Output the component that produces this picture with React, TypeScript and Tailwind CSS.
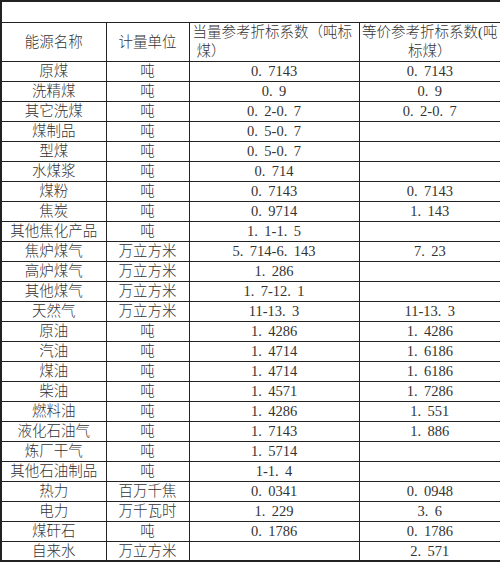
import React from "react";

type Row = [string, string, string, string];

const rows: Row[] = [
  ["原煤", "吨", "0.7143", "0.7143"],
  ["洗精煤", "吨", "0.9", "0.9"],
  ["其它洗煤", "吨", "0.2-0.7", "0.2-0.7"],
  ["煤制品", "吨", "0.5-0.7", ""],
  ["型煤", "吨", "0.5-0.7", ""],
  ["水煤浆", "吨", "0.714", ""],
  ["煤粉", "吨", "0.7143", "0.7143"],
  ["焦炭", "吨", "0.9714", "1.143"],
  ["其他焦化产品", "吨", "1.1-1.5", ""],
  ["焦炉煤气", "万立方米", "5.714-6.143", "7.23"],
  ["高炉煤气", "万立方米", "1.286", ""],
  ["其他煤气", "万立方米", "1.7-12.1", ""],
  ["天然气", "万立方米", "11-13.3", "11-13.3"],
  ["原油", "吨", "1.4286", "1.4286"],
  ["汽油", "吨", "1.4714", "1.6186"],
  ["煤油", "吨", "1.4714", "1.6186"],
  ["柴油", "吨", "1.4571", "1.7286"],
  ["燃料油", "吨", "1.4286", "1.551"],
  ["液化石油气", "吨", "1.7143", "1.886"],
  ["炼厂干气", "吨", "1.5714", ""],
  ["其他石油制品", "吨", "1-1.4", ""],
  ["热力", "百万千焦", "0.0341", "0.0948"],
  ["电力", "万千瓦时", "1.229", "3.6"],
  ["煤矸石", "吨", "0.1786", "0.1786"],
  ["自来水", "万立方米", "", "2.571"],
];

function Num({ v }: { v: string }) {
  const parts = v.split(".");
  return (
    <>
      {parts.map((p, i) => (
        <React.Fragment key={i}>
          {i > 0 && <span className="inline-block w-[10px] text-left">.</span>}
          {p}
        </React.Fragment>
      ))}
    </>
  );
}

export default function App() {
  const cell = "border border-[#222] p-0 text-center align-middle leading-[18px] whitespace-nowrap overflow-hidden";
  return (
    <div
      className="w-[500px] h-[566px] bg-white text-[#333] text-[14.5px] font-light"
      style={{ fontFamily: '"Liberation Serif", "Noto Sans CJK SC", serif' }}
    >
      <table className="table-fixed border-collapse w-[500px] border-2 border-[#222]">
        <colgroup>
          <col className="w-[105px]" />
          <col className="w-[83px]" />
          <col className="w-[170px]" />
          <col className="w-[142px]" />
        </colgroup>
        <tbody>
          <tr className="h-[21px]">
            <td colSpan={4} className="border border-[#222] p-0"></td>
          </tr>
          <tr className="h-[39px]">
            <td className={cell}>能源名称</td>
            <td className={cell}>计量单位</td>
            <td className="border border-[#222] pl-[3px] pr-0 text-left align-middle leading-[19px]">
              当量参考折标系数（吨标
              <br />
              <span className="pl-[4px]">煤）</span>
            </td>
            <td className="border border-[#222] p-0 text-center align-middle leading-[19px]">
              等价参考折标系数(吨
              <br />
              标煤）
            </td>
          </tr>
          {rows.map((r, i) => (
            <tr key={i} className="h-[20px]">
              <td className={cell}>{r[0]}</td>
              <td className={cell}>{r[1]}</td>
              <td className={cell}>
                <Num v={r[2]} />
              </td>
              <td className={cell}>
                <Num v={r[3]} />
              </td>
            </tr>
          ))}
        </tbody>
      </table>
    </div>
  );
}
